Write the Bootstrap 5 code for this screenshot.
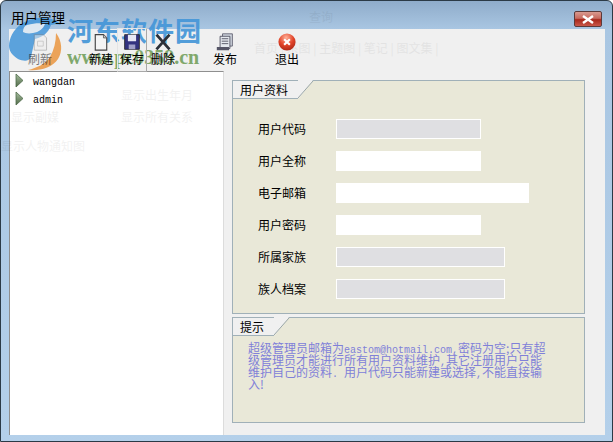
<!DOCTYPE html>
<html lang="zh">
<head>
<meta charset="utf-8">
<link href="https://cdn.jsdelivr.net/npm/bootstrap@5.3.0/dist/css/bootstrap.min.css" rel="stylesheet">
<style>
html,body{margin:0;width:613px;height:442px;overflow:hidden;background:#fff}
body{font-family:"Liberation Sans","Noto Sans CJK SC",sans-serif;font-size:12px;color:#000;line-height:1.2}
.winframe{position:relative;width:613px;height:442px;background:linear-gradient(180deg,#8facca 0,#a9c6e2 28px,#b4d0ea 100%);border:1px solid #2b3a46;border-radius:6px 6px 0 0;overflow:hidden}
.titlerow{position:relative;z-index:2;height:27px;padding:8px 0 0 10px;font-size:13.5px;line-height:16px;color:#000;font-family:"Noto Sans CJK SC",sans-serif}
.closebtn{position:absolute;right:10px;top:10px;width:28px;height:16px;border:1px solid #5c3a3a;border-radius:2px;background:linear-gradient(180deg,#d99a90 0,#c76a5f 45%,#a8281c 55%,#c9584a 100%)}
.clientarea{position:absolute;left:8px;top:28px;width:596px;height:406px;background:#f0f0f0}
.toolrow{height:42px;position:relative}
.toolbtn{position:absolute;top:0;z-index:2;width:40px;text-align:center;font-size:12px;line-height:14px;font-family:"Noto Sans CJK SC",sans-serif}
.toolbtn svg{display:block;margin:4px auto 1px;width:18px;height:18px}
.btnsel{width:30px;top:-1px;border:1px solid #a8a8a8;border-top-color:#e4e4e4;border-left-color:#e4e4e4;height:44px}
.mainrow{height:364px}
.treebox{width:215px;background:#fff;border:1px solid #8f8f8f;border-right-color:#dcdcdc;border-bottom:0;padding-top:1px;flex:none}
.treeitem{height:18px;font-family:"Liberation Mono",monospace;font-size:10px;line-height:18px;padding-left:5px}
.treeitem svg{width:9px;height:15px;margin-right:9px;vertical-align:-3px}
.panes{padding:9px 0 0 8px;width:370px}
.groupbox{position:relative;background:#e9e8d8;border:1px solid #a0b0b8;width:353px}
.grouptab{position:relative;display:inline-block;height:18px;padding:0 0 0 7px;font-size:12px;line-height:17px;font-family:"Noto Sans CJK SC",sans-serif;background:#f0f0f0;border-bottom:1px solid #a0b0b8;border-right:0}
.tabslant{position:absolute;left:100%;top:-1px;width:16px;height:18px}
.infopane{height:234px}
.hintpane{height:106px;margin-top:3px}
.formgrid{padding:14px 0 0 25px}
.formrow{height:32px}
.formrow label{width:53px;font-size:12px;text-align:left;font-family:"Noto Sans CJK SC",sans-serif;margin-right:25px;flex:none}
.fieldbox{height:20px;border:1px solid #fff;background:#fff}
.fielddis{background:#dfdfe2}
.wmid{width:145px}.wlong{width:193px}.wmed{width:169px}
.hintline{padding:6px 0 0 15px;width:318px;font-size:12px;line-height:12px;color:#8080d8;font-family:"Noto Sans CJK SC",sans-serif}
.hintline span{font-family:"Liberation Mono",monospace;font-size:10px;line-height:0;white-space:pre}
.wmlogo{position:absolute;z-index:1;left:6px;top:13px;width:58px;height:58px}
.wmcn{position:absolute;z-index:1;left:66px;top:13px;font-size:26px;line-height:32px;font-weight:700;color:#4596d8;opacity:.92;font-family:"Noto Sans CJK SC",sans-serif;letter-spacing:1px;white-space:nowrap}
.wmurl{position:absolute;z-index:1;left:66px;top:45px;font-size:20px;line-height:22px;font-weight:700;color:#6d9c55;font-family:"Liberation Serif",serif;opacity:.85;white-space:nowrap}
.ghost{position:absolute;color:#000;opacity:.05;font-size:12px;font-family:"Noto Sans CJK SC",sans-serif;white-space:nowrap}
</style>
</head>
<body>
<div class="winframe">
  <div class="titlerow">用户管理</div>
  <div class="closebtn d-flex align-items-center justify-content-center">
    <svg width="12" height="9" viewBox="0 0 12 9"><path d="M1 1l10 7M11 1L1 8" stroke="#fff" stroke-width="2.4" fill="none"/></svg>
  </div>
  <div class="clientarea">
    <div class="toolrow">
      <div class="toolbtn" style="left:11px;opacity:.5"><svg viewBox="0 0 22 22"><path d="M4 2h11l4 4v15H4z" fill="#eee" stroke="#777"/><path d="M8 10h7v6H8z" fill="none" stroke="#999"/></svg>刷新</div>
      <div class="toolbtn" style="left:72px"><svg viewBox="0 0 22 22"><path d="M4 2h10l4 4v15H4z" fill="#f4f4f4" stroke="#444" stroke-width="1.4"/><path d="M14 2v4h4" fill="#ccc" stroke="#555"/></svg>新建</div>
      <div class="toolbtn btnsel" style="left:108px"><svg viewBox="0 0 22 22"><path d="M2 2h18v18H2z" fill="#33337f" stroke="#222"/><path d="M6 2h10v8H6z" fill="#e8e8f4"/><path d="M7 14h8v6H7z" fill="#a0a0c8"/></svg>保存</div>
      <div class="toolbtn" style="left:134px"><svg viewBox="0 0 22 22"><path d="M3 2l16 18M19 2L3 20" stroke="#2c3038" stroke-width="3.4" fill="none"/></svg>删除</div>
      <div class="toolbtn" style="left:196px"><svg viewBox="0 0 22 22"><path d="M8 1h12v15H8z" fill="#cfd5de" stroke="#556"/><path d="M5 4h12v15H5z" fill="#e4e8ee" stroke="#445"/><path d="M7 7h8M7 10h8M7 13h8" stroke="#445"/><path d="M1 17h15v4H1z" fill="#556"/></svg>发布</div>
      <div class="toolbtn" style="left:258px"><svg viewBox="0 0 22 22"><defs><radialGradient id="rg" cx=".45" cy=".25" r=".85"><stop offset="0" stop-color="#ffb098"/><stop offset=".5" stop-color="#e2452a"/><stop offset="1" stop-color="#a02010"/></radialGradient></defs><circle cx="11" cy="11" r="10.5" fill="url(#rg)"/><path d="M7.5 7.5l7 7M14.500 7.500l-7 7" stroke="#fff" stroke-width="2.6"/></svg>退出</div>
    </div>
    <div class="mainrow d-flex">
      <div class="treebox">
        <div class="treeitem"><svg viewBox="0 0 9 15"><defs><linearGradient id="ag" x1="0" y1="0" x2="0" y2="1"><stop offset="0" stop-color="#a8bfa0"/><stop offset="1" stop-color="#506a48"/></linearGradient></defs><path d="M1 1l7 6.500L1 14z" fill="url(#ag)" stroke="#4f6a4a" stroke-width=".8"/></svg>wangdan</div>
        <div class="treeitem"><svg viewBox="0 0 9 15"><path d="M1 1l7 6.500L1 14z" fill="url(#ag)" stroke="#4f6a4a" stroke-width=".8"/></svg>admin</div>
      </div>
      <div class="panes">
        <div class="groupbox infopane">
          <div class="grouptab" style="width:65px">用户资料<svg class="tabslant" viewBox="0 0 16 18"><path d="M0 18h1L15 0H0z" fill="#f0f0f0"/><path d="M0 18L15 1" stroke="#9aa6a8" fill="none"/></svg></div>
          <div class="formgrid">
            <div class="formrow d-flex align-items-center"><label>用户代码</label><div class="fieldbox fielddis wmid"></div></div>
            <div class="formrow d-flex align-items-center"><label>用户全称</label><div class="fieldbox wmid"></div></div>
            <div class="formrow d-flex align-items-center"><label>电子邮箱</label><div class="fieldbox wlong"></div></div>
            <div class="formrow d-flex align-items-center"><label>用户密码</label><div class="fieldbox wmid"></div></div>
            <div class="formrow d-flex align-items-center"><label>所属家族</label><div class="fieldbox fielddis wmed"></div></div>
            <div class="formrow d-flex align-items-center"><label>族人档案</label><div class="fieldbox fielddis wmed"></div></div>
          </div>
        </div>
        <div class="groupbox hintpane">
          <div class="grouptab" style="width:41px">提示<svg class="tabslant" viewBox="0 0 16 18"><path d="M0 18h1L15 0H0z" fill="#f0f0f0"/><path d="M0 18L15 1" stroke="#9aa6a8" fill="none"/></svg></div>
          <div class="hintline">超级管理员邮箱为<span>eastom@hotmail.com,</span>密码为空;只有超级管理员才能进行所有用户资料维护<span>,</span>其它注册用户只能维护自己的资料<span>. </span>用户代码只能新建或选择<span>,</span>不能直接输入!</div>
        </div>
      </div>
    </div>
  </div>
  <span class="ghost" style="left:253px;top:40px">首页 | 系图 | 主题图 | 笔记 | 图文集 |</span>
  <span class="ghost" style="left:120px;top:87px">显示出生年月</span>
  <span class="ghost" style="left:120px;top:109px">显示所有关系</span>
  <span class="ghost" style="left:10px;top:109px">显示副媒</span>
  <span class="ghost" style="left:0;top:138px">显示人物通知图</span>
  <span class="ghost" style="left:308px;top:9px">查询</span>
  <svg class="wmlogo" viewBox="0 0 58 58"><path d="M2 32C3 14 20 2 40 4c6 1 11 3 14 7-3-1-7-1-10 0-3 9-9 12-16 14l-4 18c-2 5-8 4-13 2C5 41 2 37 2 32z" fill="#4596d8" opacity=".88"/><path d="M20 11c8-2 14-2 18-1-2 5-6 8-12 9-5 1-8 0-10-1 0-3 1-6 4-7z" fill="#f4f4f4" opacity=".85"/><path d="M49 19c6 8 7 18 2 26-6 9-18 12-30 11 9-2 17-6 22-13 4-7 6-15 6-24z" fill="#ea9a48" opacity=".9"/></svg>
  <div class="wmcn">河东软件园</div>
  <div class="wmurl">www.pc0359.cn</div>
</div>
</body>
</html>
